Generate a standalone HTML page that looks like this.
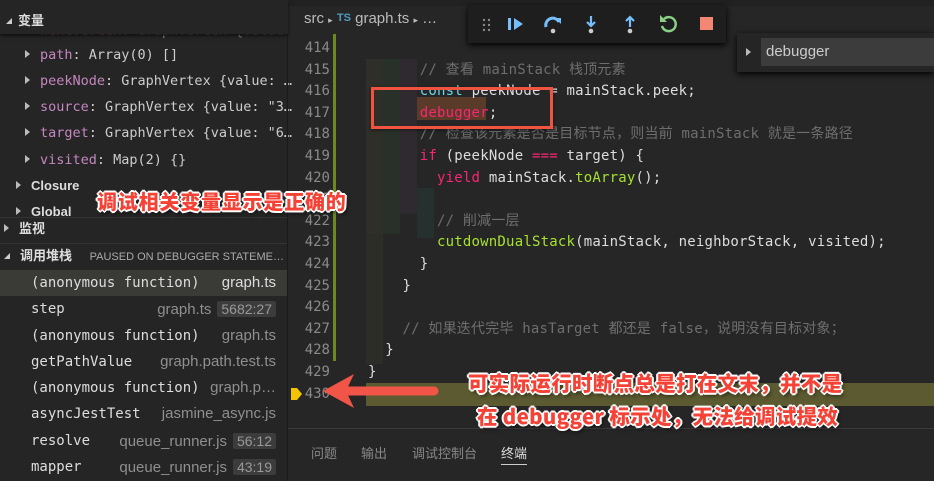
<!DOCTYPE html>
<html><head><meta charset="utf-8"><style>
*{margin:0;padding:0;box-sizing:border-box}
body{width:934px;height:481px;overflow:hidden;background:#262626;font-family:"Liberation Sans","Noto Sans CJK SC",sans-serif;position:relative;color:#ccc}
.abs{position:absolute}
.side{left:0;top:0;width:288px;height:481px;background:#252525}
.mono{font-family:"DejaVu Sans Mono","Noto Sans CJK SC",monospace}
.row{position:absolute;left:0;width:288px;height:26px;line-height:26px;font-size:13.5px;white-space:nowrap}
.tri{display:inline-block;width:0;height:0;border-left:5px solid #bbb;border-top:4px solid transparent;border-bottom:4px solid transparent;margin-right:10px;vertical-align:1px}
.k{color:#c586c0}
.hdr{font-size:13px;font-weight:bold;color:#ddd}
.dn{display:inline-block;width:0;height:0;border-right:6px solid #ccc;border-top:6px solid transparent;margin-right:10px;vertical-align:1px}
.st{position:absolute;left:31px;width:245px;height:26px;line-height:26px;font-size:14px;white-space:nowrap;color:#ddd}
.st .f{position:absolute;right:0;top:0;color:#8f8f8f;font-family:"Liberation Sans",sans-serif;font-size:15px}
.badge{background:#3c3c3c;color:#999;padding:0 4px;margin-left:6px;border-radius:2px;font-family:"Liberation Sans";font-size:14px}
.ln{position:absolute;left:290px;width:40px;text-align:right;font-size:14px;color:#8a8a8a;line-height:21.6px}
.code{position:absolute;left:0;font-size:14px;letter-spacing:0.2px;line-height:21.6px;white-space:pre;color:#ddd}
.cm{color:#6e6e6e}
.red{color:#f92672}
.gr{color:#a6e22e}
.ann{color:#f44236;font-weight:900;text-shadow:0 0 2px #fff,1px 1px 0 #fff,-1px -1px 0 #fff,1px -1px 0 #fff,-1px 1px 0 #fff,2px 0 0 #fff,-2px 0 0 #fff,0 2px 0 #fff,0 -2px 0 #fff,2px 3px 4px rgba(0,0,0,.6);white-space:nowrap;font-family:"Noto Sans CJK SC","Liberation Sans",sans-serif}
</style></head><body>
<div class="abs side"></div>
<div class="abs" style="left:0;top:0;width:288px;height:34px;background:#252525;box-shadow:0 2px 3px #111;z-index:2">
 <div style="position:absolute;left:6px;top:10px;font-size:13px;font-weight:bold;color:#ddd"><span class="dn" style="margin-right:6px"></span>变量</div>
</div>
<div class="row mono" style="top:18px;left:25px;color:#999;overflow:hidden;width:260px"><span class="tri"></span><span class="k">nextVertex</span>: GraphVertex {value…</div>
<div class="row mono" style="top:42px;left:25px"><span class="tri"></span><span class="k">path</span>: Array(0) []</div>
<div class="row mono" style="top:68px;left:25px"><span class="tri"></span><span class="k">peekNode</span>: GraphVertex {value: …</div>
<div class="row mono" style="top:94px;left:25px"><span class="tri"></span><span class="k">source</span>: GraphVertex {value: "3…</div>
<div class="row mono" style="top:120px;left:25px"><span class="tri"></span><span class="k">target</span>: GraphVertex {value: "6…</div>
<div class="row mono" style="top:147px;left:25px"><span class="tri"></span><span class="k">visited</span>: Map(2) {}</div>
<div class="row hdr" style="top:173px;left:16px"><span class="tri"></span>Closure</div>
<div class="row hdr" style="top:199px;left:16px"><span class="tri"></span>Global</div>
<div class="abs" style="left:0;top:217px;width:288px;height:26px;background:#252525;border-top:1px solid #333"></div>
<div class="row hdr" style="top:216px;left:4px"><span class="tri"></span>监视</div>
<div class="abs" style="left:0;top:243px;width:288px;height:27px;background:#252525;border-top:1px solid #333"></div>
<div class="row hdr" style="top:243px;left:4px"><span class="dn"></span>调用堆栈 <span style="font-weight:normal;font-size:11px;color:#aaa;margin-left:14px">PAUSED ON DEBUGGER STATEME…</span></div>
<div class="abs" style="left:0;top:270px;width:287px;height:26px;background:#3a3a37"></div>
<div class="st mono" style="top:270px">(anonymous function)<span class="f" style="color:#ddd">graph.ts</span></div>
<div class="st mono" style="top:296px">step<span class="f">graph.ts<span class="badge">5682:27</span></span></div>
<div class="st mono" style="top:323px">(anonymous function)<span class="f">graph.ts</span></div>
<div class="st mono" style="top:349px">getPathValue<span class="f">graph.path.test.ts</span></div>
<div class="st mono" style="top:375px">(anonymous function)<span class="f">graph.p…</span></div>
<div class="st mono" style="top:401px">asyncJestTest<span class="f">jasmine_async.js</span></div>
<div class="st mono" style="top:428px">resolve<span class="f">queue_runner.js<span class="badge">56:12</span></span></div>
<div class="st mono" style="top:454px">mapper<span class="f">queue_runner.js<span class="badge">43:19</span></span></div>
<div class="abs" style="left:287px;top:0;width:1px;height:481px;background:#1a1a1a"></div>

<div class="abs" style="left:288px;top:0;width:646px;height:6px;background:#212121"></div>
<div class="abs" style="left:304px;top:10px;font-size:15px;color:#bbb">src <span style="font-size:9px">&#9656;</span> <span style="color:#519aba;font-size:11px;font-weight:bold;vertical-align:2px">TS</span> graph.ts <span style="font-size:9px">&#9656;</span> …</div>
<div class="abs" style="left:333px;top:34px;width:3px;height:327px;background:#6a8a1e"></div>
<div class="abs" style="left:366px;top:59px;width:17px;height:175px;background:#2d2f28"></div>
<div class="abs" style="left:383px;top:59px;width:17px;height:175px;background:#283129"></div>
<div class="abs" style="left:400px;top:59px;width:17px;height:155px;background:#2f2a30"></div>
<div class="abs" style="left:417px;top:188px;width:17px;height:50px;background:#26302f"></div>
<div class="abs" style="left:366px;top:234px;width:17px;height:130px;background:#2c2d26"></div>
<div class="abs" style="left:366px;top:383px;width:568px;height:23px;background:#5b5a30"></div>
<div class="abs" style="left:417px;top:97px;width:69px;height:23px;background:#5a3a28"></div>

<div class="ln mono" style="top:38px">414<br>415<br>416<br>417<br>418<br>419<br>420<br>421<br>422<br>423<br>424<br>425<br>426<br>427<br>428<br>429<br>430</div>
<div class="code mono" style="top:38px;left:368px">
      <span class="cm">// 查看 mainStack 栈顶元素</span>
      <span style="color:#66d9ef">const</span> peekNode = mainStack.peek;
      <span class="red">debugger</span>;
      <span class="cm">// 检查该元素是否是目标节点，则当前 mainStack 就是一条路径</span>
      <span class="red">if</span> (peekNode <span class="red">===</span> target) {
        <span class="red">yield</span> mainStack.<span class="gr">toArray</span>();

        <span class="cm">// 削减一层</span>
        <span class="gr">cutdownDualStack</span>(mainStack, neighborStack, visited);
      }
    }

    <span class="cm">// 如果迭代完毕 hasTarget 都还是 false，说明没有目标对象；</span>
  }
}</div>
<div class="abs" style="left:291px;top:388px;width:6px;height:12px;background:#f5c400"></div>
<div class="abs" style="left:297px;top:388px;width:0;height:0;border-left:5px solid #f5c400;border-top:6px solid transparent;border-bottom:6px solid transparent"></div>

<div class="abs" style="left:371px;top:87px;width:182px;height:42px;border:3px solid #f0533f;box-shadow:0 1px 3px rgba(0,0,0,.5)"></div>

<div class="abs" style="left:468px;top:5px;width:258px;height:38px;background:#1e1e1e;box-shadow:0 2px 6px #000">
 <svg width="258" height="38" style="position:absolute;left:0;top:0">
  <g fill="#888"><circle cx="16" cy="15" r="1.2"/><circle cx="21" cy="15" r="1.2"/><circle cx="16" cy="20" r="1.2"/><circle cx="21" cy="20" r="1.2"/><circle cx="16" cy="25" r="1.2"/><circle cx="21" cy="25" r="1.2"/></g>
  <rect x="40" y="13" width="3" height="12" fill="#75beff"/><path d="M46 13 L55 19 L46 25Z" fill="#75beff"/>
  <path d="M78 22 A7 7 0 0 1 91 17" stroke="#75beff" stroke-width="3" fill="none"/><path d="M87 13 L93 13 L93 19Z" fill="#75beff"/><circle cx="85" cy="26" r="2.3" fill="#ccc"/>
  <path d="M123 11 V21 M119 17 L123 21 L127 17" stroke="#75beff" stroke-width="2.2" fill="none"/><circle cx="123" cy="26" r="2.3" fill="#ccc"/>
  <path d="M162 22 V12 M158 16 L162 12 L166 16" stroke="#75beff" stroke-width="2.2" fill="none"/><circle cx="162" cy="26" r="2.3" fill="#ccc"/>
  <path d="M196 14 A7 7 0 1 1 194 21" stroke="#89d185" stroke-width="2.5" fill="none"/><path d="M192 10 L192 17 L199 17Z" fill="#89d185"/>
  <rect x="232" y="12" width="13" height="13" fill="#f48771"/>
 </svg>
</div>
<div class="abs" style="left:737px;top:33px;width:197px;height:39px;background:#252526;box-shadow:0 2px 6px #000">
 <span class="tri" style="position:absolute;left:9px;top:15px"></span>
 <div style="position:absolute;left:24px;top:5px;width:173px;height:28px;background:#3c3c3c;font-size:15px;line-height:28px;padding-left:5px;color:#ccc">debugger</div>
</div>

<div class="abs" style="left:288px;top:428px;width:646px;height:53px;background:#262626;border-top:1px solid #3a3a3a"></div>
<div class="abs" style="left:311px;top:443px;font-size:13px;color:#888">问题</div>
<div class="abs" style="left:361px;top:443px;font-size:13px;color:#888">输出</div>
<div class="abs" style="left:412px;top:443px;font-size:13px;color:#888">调试控制台</div>
<div class="abs" style="left:501px;top:443px;font-size:13px;color:#ddd">终端</div>
<div class="abs" style="left:501px;top:464px;width:26px;height:1px;background:#ccc"></div>

<div class="abs ann" style="left:97px;top:186px;font-size:20px;letter-spacing:0.8px">调试相关变量显示是正确的</div>
<div class="abs ann" style="left:468px;top:367px;font-size:20.5px;letter-spacing:0.3px">可实际运行时断点总是打在文末，并不是</div>
<div class="abs ann" style="left:477px;top:400px;font-size:20.5px;letter-spacing:0.3px">在 debugger 标示处，无法给调试提效</div>
<svg class="abs" style="left:318px;top:370px" width="125" height="42">
 <path d="M30 21 H116" stroke="#f15548" stroke-width="9" stroke-linecap="round"/>
 <path d="M5 21 L36 4 L28 21 L36 38Z" fill="#f15548"/>
</svg>
</body></html>
